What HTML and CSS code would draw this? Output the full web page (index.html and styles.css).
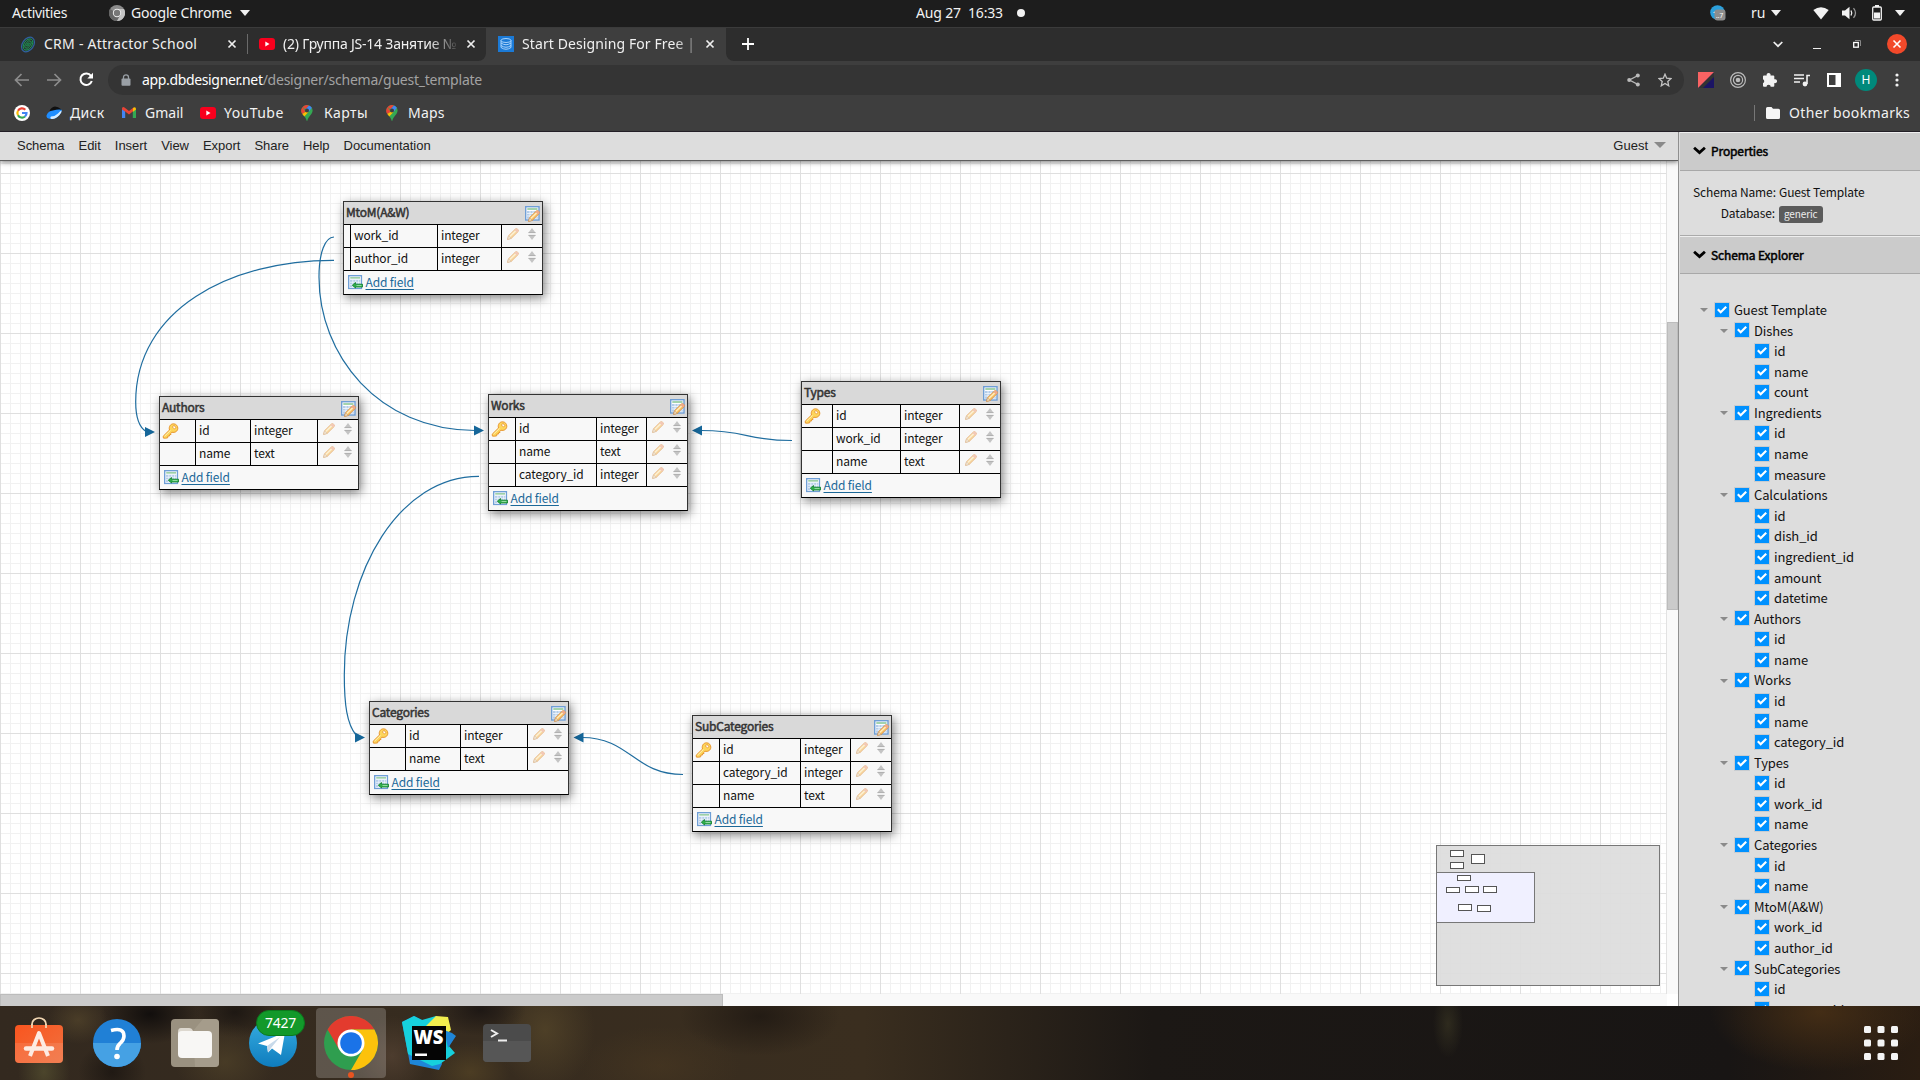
FILE: index.html
```html
<!DOCTYPE html>
<html lang="en">
<head>
<meta charset="utf-8">
<title>Start Designing For Free</title>
<link rel="stylesheet" href="styles.css">
</head>
<body>
<svg class="defs" width="0" height="0">
  <symbol id="i-chrome" viewBox="0 0 54 54">
    <circle cx="27" cy="27" r="27" fill="#2f9e4f"/>
    <path d="M3.6 13.5A27 27 0 0 1 50.4 13.5L27 13.5L15.3 33.8Z" fill="#e33b2e"/>
    <path d="M27 13.5H50.4A27 27 0 0 1 27 54L38.7 33.8Z" fill="#fcc20c"/>
    <circle cx="27" cy="27" r="13.5" fill="#fff"/><circle cx="27" cy="27" r="10.8" fill="#1a73e8"/>
  </symbol>
  <symbol id="i-yt" viewBox="0 0 16 12"><rect width="16" height="12" rx="3" fill="#f8001d"/><path d="M6.3 3.6L10.5 6L6.3 8.4Z" fill="#fff"/></symbol>
  <symbol id="i-pin" viewBox="0 0 12 16">
    <path d="M6 0A5.6 5.6 0 0 1 11.6 5.6C11.6 9.500 7.500 11 6.200 16H5.800C4.500 11 .4 9.500 .4 5.600A5.600 5.600 0 0 1 6 0Z" fill="#34a853"/>
    <path d="M6 0A5.600 5.600 0 0 0 1.700 2L4.400 4.200L8 .4A5.600 5.600 0 0 0 6 0Z" fill="#ea4335"/>
    <path d="M8 .4A5.600 5.600 0 0 1 10.900 2.800L7.500 6.900L4.500 4.200Z" fill="#4285f4"/>
    <path d="M1.700 2A5.600 5.600 0 0 0 1.300 9L4.600 7Z" fill="#ea4335"/>
    <path d="M1.300 9C2 10 2.600 10.700 3.300 11.600L7.500 6.900L4.400 7Z" fill="#fbbc04"/>
    <circle cx="6" cy="5.600" r="2" fill="#3e3e3e"/>
  </symbol>
  <symbol id="i-x" viewBox="0 0 10 10"><path d="M1.500 1.500L8.500 8.500M8.500 1.500L1.500 8.500" stroke="#eee" stroke-width="1.700"/></symbol>
  <symbol id="i-sheet" viewBox="0 0 15 15">
    <rect x=".7" y=".7" width="13.300" height="13.300" fill="#fdfdff" stroke="#6f9fd6" stroke-width="1.400"/>
    <path d="M2.300 3H12.500" stroke="#7cc08a" stroke-width="1.400"/>
    <path d="M2 5H12.800V12.800H2Z" fill="#b4cdea"/>
    <path d="M2 7.500H13M2 10H13M5 5V13M8 5V13M11 5V13" stroke="#f4f8fd" stroke-width=".8"/>
  </symbol>
  <symbol id="i-pencil" viewBox="0 0 12 12">
    <path d="M.6 11.400L1.500 7.800L8.500 .9Q9.600 .2 10.800 1.300Q11.900 2.500 11.100 3.600L4.200 10.400Z" fill="#fbc66a" stroke="#d98b3c" stroke-width=".9"/>
    <path d="M2.600 8.600L9.300 2.200" stroke="#fff0c4" stroke-width="1.300"/>
    <path d="M8.500 .9Q9.600 .2 10.800 1.300Q11.900 2.500 11.100 3.600L10 4.600L7.500 2Z" fill="#f0a98c"/>
    <path d="M.6 11.400L1.500 7.800L4.200 10.400Z" fill="#f3e0c4" stroke="#b98a5a" stroke-width=".5"/>
  </symbol>
  <symbol id="i-key" viewBox="0 0 16 16">
    <path d="M.7 13.200L7 7C6 3.800 8 .8 11 .8C13.700 .8 15.300 3 15.300 5.200C15.300 8.200 12.500 10 9.400 9.200L8.300 10.300L8.500 11.500L7.200 11.500L7 13L5.400 13L5.200 14.800L3 15.200L.9 15.100Z" fill="#fdd55a" stroke="#e8962e" stroke-width="1"/>
    <path d="M2 13.200L8 7.400" stroke="#fff2b8" stroke-width="1"/>
    <ellipse cx="11.700" cy="4.200" rx="1.700" ry="1.300" transform="rotate(40 11.700 4.200)" fill="#fff" stroke="#e8962e" stroke-width=".8"/>
  </symbol>
  <symbol id="i-sort" viewBox="0 0 8 12"><path d="M4 0L7.800 5H.2Z" fill="#c4c4c4"/><path d="M4 12L7.800 7H.2Z" fill="#c4c4c4"/><path d="M.5 4.600H7.500M.5 7.400H7.500" stroke="#aaa" stroke-width=".8"/></symbol>
  <symbol id="i-add" viewBox="0 0 15 15">
    <use href="#i-sheet" width="14.500" height="14.500"/>
    <path d="M4.300 10.200L7.500 7.500V9.200H14.500V12H7.500V13Z" fill="#2fae4a" stroke="#0e7d2b" stroke-width=".8"/><path d="M8.500 10.600H13.500" stroke="#9be0a8"/>
  </symbol>
  <symbol id="i-check" viewBox="0 0 14 14"><rect width="14" height="14" fill="#0091ff"/><path d="M2.800 6.300L5.700 9.200L11.200 3.800" fill="none" stroke="#fff" stroke-width="2.200"/></symbol>
</svg>

<header class="topbar">
  <div class="topbar-left">
    <span class="activities">Activities</span>
    <svg width="16" height="16" viewBox="0 0 16 16"><circle cx="8" cy="8" r="8" fill="#8c8c8c"/><path d="M1 4A8 8 0 0 0 8 16L11 10Z" fill="#666"/><path d="M8 16A8 8 0 0 0 15 4H8L11.500 10Z" fill="#c4c4c4"/><circle cx="8" cy="8" r="4.200" fill="#eee"/><circle cx="8" cy="8" r="3.200" fill="#777"/></svg>
    <span class="appname">Google Chrome</span><i class="caret"></i>
  </div>
  <div class="clock"><span>Aug 27&nbsp; 16:33</span><i class="dot"></i></div>
  <div class="tray">
    <svg class="t-tg" width="16" height="16" viewBox="0 0 16 16"><circle cx="7.500" cy="7.500" r="7.300" fill="#2ba0dc"/><path d="M3 7.500L8 5V9Z" fill="#fff"/><rect x="4.500" y="4.500" width="11" height="11" rx="3" fill="#8d8d8d"/><text x="6" y="13" font-size="6.500" fill="#fff" font-family="Noto Sans">..7</text></svg>
    <span class="lang">ru</span><i class="caret"></i>
    <svg class="t-wifi" width="16" height="13" viewBox="0 0 16 13"><path d="M8 12.500L.3 3Q8 -2.500 15.700 3Z" fill="#f2f2f2"/></svg>
    <svg class="t-vol" width="15" height="14" viewBox="0 0 15 14"><path d="M0 4.500H3L7.500 .8V13.200L3 9.500H0Z" fill="#f2f2f2"/><path d="M9 4.500Q10.500 7 9 9.500" fill="none" stroke="#f2f2f2" stroke-width="1.300"/><path d="M11.500 2.200Q15.500 7 11.500 11.800" fill="none" stroke="#999" stroke-width="1.300"/></svg>
    <svg class="t-bat" width="10" height="16" viewBox="0 0 10 16"><rect x=".7" y="2" width="8.600" height="13" rx="1" fill="none" stroke="#f2f2f2" stroke-width="1.300"/><rect x="3" y="0" width="4" height="2" fill="#f2f2f2"/><rect x="2" y="7.500" width="6" height="6" fill="#f2f2f2"/></svg>
    <i class="caret"></i>
  </div>
</header>

<div class="tabs">
  <div class="tab tab-1">
    <svg width="16" height="17" viewBox="0 0 16 17"><g fill="none" stroke-width=".9" transform="rotate(35 8 8.500)"><ellipse cx="8" cy="8.500" rx="5.600" ry="8" stroke="#2f62a0" stroke-width="1.200"/><ellipse cx="8" cy="8.500" rx="4" ry="6.200" stroke="#17a35a"/><ellipse cx="8" cy="8.500" rx="2.300" ry="4.200" stroke="#17a35a"/><ellipse cx="8" cy="8.500" rx=".8" ry="2" stroke="#17a35a"/></g></svg>
    <span class="title t1">CRM - Attractor School</span>
    <svg class="close" width="10" height="10"><use href="#i-x"/></svg>
  </div>
  <div class="tab tab-2">
    <svg width="16" height="12"><use href="#i-yt"/></svg>
    <span class="title t2">(2) Группа JS-14 Занятие №</span>
    <svg class="close" width="10" height="10"><use href="#i-x"/></svg>
  </div>
  <div class="tab tab-3">
    <svg width="16" height="16" viewBox="0 0 16 16"><rect width="16" height="16" fill="#1b7ad6"/><g fill="none" stroke="#b9dcff" stroke-width=".9"><ellipse cx="8" cy="4.500" rx="5" ry="2"/><path d="M3 4.500V11.500Q8 15 13 11.500V4.500M3 7Q8 10.500 13 7M3 9.500Q8 13 13 9.500"/></g></svg>
    <span class="title t3">Start Designing For Free |</span>
    <svg class="close" width="10" height="10"><use href="#i-x"/></svg>
  </div>
  <div class="newtab"><svg width="12" height="12" viewBox="0 0 12 12"><path d="M6 0V12M0 6H12" stroke="#fff" stroke-width="1.800"/></svg></div>
  <div class="winbtns">
    <svg width="10" height="7" viewBox="0 0 10 7"><path d="M.7 1L5 5.200L9.300 1" fill="none" stroke="#eee" stroke-width="1.700"/></svg>
    <svg class="w-min" width="8" height="6" viewBox="0 0 8 6"><path d="M0 5.500H8" stroke="#eee"/></svg>
    <svg class="w-max" width="8" height="8" viewBox="0 0 8 8"><path d="M2 .5H7.500V6" fill="none" stroke="#888"/><rect x=".7" y="2.500" width="4.600" height="4.700" fill="none" stroke="#fff" stroke-width="1.300"/></svg>
    <svg class="w-x" width="20" height="20" viewBox="0 0 20 20"><circle cx="10" cy="10" r="10" fill="#f2492a"/><path d="M6.500 6.500L13.500 13.500M13.500 6.500L6.500 13.500" stroke="#fff" stroke-width="1.600"/></svg>
  </div>
</div>

<div class="toolbar">
  <svg class="nav" width="15" height="14" viewBox="0 0 15 14"><path d="M15 7H1.500M7.500 1L1.500 7L7.500 13" fill="none" stroke="#8d8d8d" stroke-width="1.700"/></svg>
  <svg class="nav n2" width="15" height="14" viewBox="0 0 15 14"><path d="M0 7H13.500M7.500 1L13.500 7L7.500 13" fill="none" stroke="#8d8d8d" stroke-width="1.700"/></svg>
  <svg class="nav n3" width="15" height="15" viewBox="0 0 15 15"><path d="M12.800 9A5.800 5.800 0 1 1 12 3.800" fill="none" stroke="#fff" stroke-width="2"/><path d="M14 .8V6.500H8.300Z" fill="#fff"/></svg>
  <div class="urlbar">
    <svg width="10" height="12" viewBox="0 0 10 12"><rect x=".5" y="4.500" width="9" height="7.200" rx="1" fill="#9aa0a6"/><path d="M2.500 5V3.300A2.500 2.500 0 0 1 7.500 3.300V5" fill="none" stroke="#9aa0a6" stroke-width="1.300"/></svg>
    <span class="url"><b>app.dbdesigner.net</b><span>/designer/schema/guest_template</span></span>
    <svg class="u-share" width="13" height="14" viewBox="0 0 13 14"><path d="M11 2.500L2.500 7L11 11.500" fill="none" stroke="#bbb" stroke-width="1.400"/><g fill="#bbb"><circle cx="10.800" cy="2.400" r="2"/><circle cx="2.200" cy="7" r="2"/><circle cx="10.800" cy="11.600" r="2"/></g></svg>
    <svg class="u-star" width="14" height="14" viewBox="0 0 14 14"><path d="M7 1.200L8.700 5.200L13 5.600L9.800 8.500L10.700 12.800L7 10.500L3.300 12.800L4.200 8.500L1 5.600L5.300 5.200Z" fill="none" stroke="#c4c4c4" stroke-width="1.300"/></svg>
  </div>
  <div class="exts">
    <svg width="16" height="16" viewBox="0 0 16 16"><rect width="16" height="16" fill="#1b1464"/><path d="M0 16L16 0V5L5 16Z" fill="#333"/><path d="M0 0H16L0 16Z" fill="#f96363"/></svg>
    <svg width="16" height="16" viewBox="0 0 16 16"><g fill="none" stroke="#bbb" stroke-width="1.200"><circle cx="8" cy="8" r="7.400"/><circle cx="8" cy="8" r="4.600"/></g><circle cx="8" cy="8" r="2.300" fill="#bbb"/></svg>
    <svg width="16" height="16" viewBox="0 0 16 16"><path d="M1 4.500Q1 3.500 2 3.500H4.700A2 2 0 1 1 8.500 3.500H11.300Q12.300 3.500 12.300 4.500V7.300A2 2 0 1 1 12.300 11V13.800Q12.300 14.800 11.300 14.800H8.700A2 2 0 0 0 4.500 14.800H2Q1 14.800 1 13.800V11A2 2 0 0 0 1 7.300Z" fill="#f2f2f2"/></svg>
    <svg width="16" height="14" viewBox="0 0 16 14"><path d="M0 2H10M0 5.500H10M0 9H6" stroke="#f2f2f2" stroke-width="1.600"/><path d="M13 11V2.500H16" fill="none" stroke="#f2f2f2" stroke-width="1.600"/><circle cx="11" cy="11" r="2.400" fill="#f2f2f2"/></svg>
    <svg width="14" height="14" viewBox="0 0 14 14"><rect x="1" y="1" width="12" height="12" fill="none" stroke="#fff" stroke-width="2"/><rect x="8.500" y="1" width="5" height="12" fill="#fff"/></svg>
    <span class="avatar">H</span>
    <svg width="4" height="14" viewBox="0 0 4 14"><g fill="#f2f2f2"><circle cx="2" cy="2" r="1.600"/><circle cx="2" cy="7" r="1.600"/><circle cx="2" cy="12" r="1.600"/></g></svg>
  </div>
</div>

<div class="bookmarks">
  <svg class="b-g" width="16" height="16" viewBox="0 0 16 16"><circle cx="8" cy="8" r="8" fill="#fff"/><g fill="none" stroke-width="2.200"><path d="M11.300 4.700A4.600 4.600 0 0 0 4 5.800" stroke="#ea4335"/><path d="M4 5.700A4.600 4.600 0 0 0 4 10.300" stroke="#fbbc05"/><path d="M4 10.200A4.600 4.600 0 0 0 11 11.500" stroke="#34a853"/><path d="M11 11.500A4.600 4.600 0 0 0 12.500 8H8" stroke="#4285f4"/></g></svg>
  <svg class="b-d" width="16" height="14" viewBox="0 0 16 14"><path d="M3.500 5Q5 1 9 .5Q12 .5 15.500 3.500L10 7Z" fill="#101010"/><path d="M.5 9.500Q2 5 7 4.500Q12 3 15.800 3.800Q16 6 13.500 9Q9.500 13.500 4.500 13Q0 12.500 .5 9.500Z" fill="#1e8dff"/><path d="M5 10.500Q9 10.500 12 7.500Q14 5 15.600 4.500Q16 6 13.500 9Q9.500 13.500 5.500 13Q3.500 12 5 10.500Z" fill="#d6ecff"/></svg>
  <span class="bm bm-disk">Диск</span>
  <svg class="b-m" width="14" height="11" viewBox="0 0 14 11"><path d="M0 1.500V11H3.200V4.500Z" fill="#4285f4"/><path d="M14 1.500V11H10.800V4.500Z" fill="#34a853"/><path d="M0 1.200Q.8 -.6 2.500 .5L7 4L11.500 .5Q10.800 4 10.800 4.500L7 7.500L3.200 4.500L0 2.500Z" fill="#ea4335"/><path d="M11 .9Q13 -.6 14 1.400V2.500L10.800 5Z" fill="#fbbc04"/></svg>
  <span class="bm bm-gmail">Gmail</span>
  <svg class="b-y" width="16" height="12"><use href="#i-yt"/></svg>
  <span class="bm bm-yt">YouTube</span>
  <svg class="b-p" width="12" height="16"><use href="#i-pin"/></svg>
  <span class="bm bm-karty">Карты</span>
  <svg class="b-p2" width="12" height="16"><use href="#i-pin"/></svg>
  <span class="bm bm-maps">Maps</span>
  <div class="other"><svg width="14" height="12" viewBox="0 0 14 12"><path d="M0 1.500Q0 0 1.500 0H5.500L7 1.700H12.500Q14 1.700 14 3.200V10.500Q14 12 12.500 12H1.500Q0 12 0 10.500Z" fill="#f5f5f5"/></svg><span class="bm bm-other">Other bookmarks</span></div>
</div>

<main class="page">
  <section class="designer">
    <nav class="menu">
      <a>Schema</a><a>Edit</a><a>Insert</a><a>View</a><a>Export</a><a>Share</a><a>Help</a><a>Documentation</a>
      <span class="user">Guest<i></i></span>
    </nav>
    <div class="work">
      <div class="canvas">
        <svg class="links" width="1667" height="834" viewBox="0 160 1667 834">
          <g fill="none" stroke="#1f6d9f" stroke-width="1.200">
            <path d="M334 237C325 237 319 253 319 277C319 355 378 430 475 430.500"/>
            <path d="M334 260.300C230 260 135.700 310 135.700 402C135.700 418 139 427 146 431.500"/>
            <path d="M479 476.300C400 476 344.300 570 344.300 675C344.300 705 347 724 356 735"/>
            <path d="M701 430.500C747 430.500 747 440.500 792 440.500"/>
            <path d="M582 737.500C630 737.500 634 774.500 683 774.500"/>
          </g>
          <g fill="#16679a">
            <path d="M474 425.500V435.500L484 430.500Z"/><path d="M145 427V437L155 432Z"/><path d="M355 732.500V742.500L365 737.500Z"/>
            <path d="M702 425.500V435.500L692 430.500Z"/><path d="M583.500 732.500V742.500L573.500 737.500Z"/>
          </g>
        </svg>
        <div id="tables"></div>
        <div class="minimap">
          <svg width="224" height="141" viewBox="0 0 224 141"><rect x=".5" y="27.500" width="98" height="50" fill="#f0f0ff" stroke="#777"/>
          <g fill="#fff" stroke="#555"><rect x="14.500" y="5.500" width="13" height="6"/><rect x="35.500" y="9.500" width="13" height="9"/><rect x="14.500" y="17.500" width="13" height="6"/><rect x="21.500" y="30.500" width="13" height="5"/><rect x="10.500" y="42.500" width="13" height="5"/><rect x="29.500" y="41.500" width="13" height="6"/><rect x="47.500" y="41.500" width="13" height="6"/><rect x="22.500" y="59.500" width="13" height="6"/><rect x="41.500" y="60.500" width="13" height="6"/></g></svg>
        </div>
      </div>
      <div class="vscroll"><i></i></div>
      <div class="hscroll"><i></i></div>
      <div class="corner"></div>
    </div>
  </section>
  <aside class="side">
    <h2><svg width="13" height="9" viewBox="0 0 12 8"><path d="M1 1.500L6 6L11 1.500" fill="none" stroke="#000" stroke-width="2.600"/></svg><span>Properties</span></h2>
    <div class="props">
      <span class="k">Schema Name:</span><span>Guest Template</span>
      <span class="k">Database:</span><span><em>generic</em></span>
    </div>
    <h2><svg width="13" height="9" viewBox="0 0 12 8"><path d="M1 1.500L6 6L11 1.500" fill="none" stroke="#000" stroke-width="2.600"/></svg><span>Schema Explorer</span></h2>
    <div class="tree" id="tree"></div>
  </aside>
</main>

<footer class="dock">
  <div class="app"><svg width="48" height="46" viewBox="0 0 48 46"><defs><linearGradient id="gs" x1="0" y1="0" x2="1" y2="1"><stop offset="0" stop-color="#f9551f"/><stop offset="1" stop-color="#f0713f"/></linearGradient></defs><path d="M17 11V7A7 6 0 0 1 31 7V11" fill="none" stroke="#f3d8b4" stroke-width="1.700"/><rect y="8" width="48" height="38" rx="4" fill="url(#gs)"/><path d="M17 11V7M31 11V7" stroke="#f3d8b4" stroke-width="1.700"/><path d="M0 26H48V42Q48 46 44 46H4Q0 46 0 42Z" fill="#fff" opacity=".1"/><g fill="none" stroke="#fdebe2" stroke-width="4"><path d="M15 39L24 16L33 39" stroke-linejoin="round"/><path d="M11 31.500H37" stroke-linecap="round" stroke-width="4.500"/></g></svg></div>
  <div class="app"><svg width="48" height="48" viewBox="0 0 48 48"><circle cx="24" cy="24" r="24" fill="#2080d6"/><path d="M0 24A24 24 0 0 0 48 24Z" fill="#45a1e4"/><path d="M18 11.500Q31 8 31 17Q31 21 27 24.500Q24 27 24 31" fill="none" stroke="#fff" stroke-width="3.600"/><circle cx="24" cy="37.500" r="2.800" fill="#fff"/></svg></div>
  <div class="app"><svg width="48" height="48" viewBox="0 0 48 48"><rect width="48" height="48" rx="4" fill="#9a9180"/><path d="M22 12L32 0H44Q48 0 48 4V44Q48 48 44 48H24Z" fill="#aaa190" opacity=".7"/><path d="M7 13Q7 9 10 9H18Q21 9 22 12H37V20H7Z" fill="#ddd8cf"/><rect x="7" y="12" width="34" height="27" rx="4" fill="#f8f7f5"/></svg></div>
  <div class="app"><svg width="48" height="48" viewBox="0 0 48 48"><defs><linearGradient id="gt" x1="0" y1="0" x2="0" y2="1"><stop offset="0" stop-color="#37aee2"/><stop offset="1" stop-color="#0f7cbd"/></linearGradient></defs><circle cx="24" cy="24" r="24" fill="url(#gt)"/><path d="M9 24.500L36 13.500L32 36L23 29.500L19 33.500L18 27Z" fill="#fff"/><path d="M18 27L31 18L22 29L19 33.500Z" fill="#c8daea"/></svg><b class="badge">7427</b></div>
  <div class="app active"><svg width="54" height="54"><use href="#i-chrome"/></svg><i></i></div>
  <div class="app"><svg width="54" height="54" viewBox="0 0 54 54"><path d="M0 6L12 0L24 6L32 10L40 48L37 54L8 48Z" fill="#1e86d8"/><path d="M0 6L12 0L20 4L34 0L42 14L53 20L47 30L53 37L38 48L30 50L6 38Z" fill="#16d0dc"/><path d="M24 10L34 0L46 1L49 14L40 22Z" fill="#f2ee4e"/><path d="M42 14L50 17L54 20L46 32Z" fill="#1f86d8"/><rect x="10" y="10" width="34" height="34" fill="#050505"/><rect x="13" y="37.500" width="12" height="2.500" fill="#fff"/><text x="11.500" y="28" font-family="Open Sans" font-weight="800" font-size="20" textLength="30" lengthAdjust="spacingAndGlyphs" fill="#fff">WS</text></svg></div>
  <div class="app"><svg width="48" height="38" viewBox="0 0 48 38"><rect width="48" height="38" rx="4" fill="#4b4b4b"/><path d="M0 17H48V34Q48 38 44 38H4Q0 38 0 34Z" fill="#565656"/><path d="M8 6L14 9.500L8 13" fill="none" stroke="#eee" stroke-width="2"/><path d="M15 16.500H24" stroke="#eee" stroke-width="2"/></svg></div>
  <svg class="grid9" width="34" height="34" viewBox="0 0 34 34"><g fill="#f4f4f4"><rect width="7" height="7" rx="1.500"/><rect x="13.500" width="7" height="7" rx="1.500"/><rect x="27" width="7" height="7" rx="1.500"/><rect y="13.500" width="7" height="7" rx="1.500"/><rect x="13.500" y="13.500" width="7" height="7" rx="1.500"/><rect x="27" y="13.500" width="7" height="7" rx="1.500"/><rect y="27" width="7" height="7" rx="1.500"/><rect x="13.500" y="27" width="7" height="7" rx="1.500"/><rect x="27" y="27" width="7" height="7" rx="1.500"/></g></svg>
</footer>
<script src="script.js"></script>
</body>
</html>
```
FILE: styles.css
```css
* { box-sizing: border-box; }
body { margin: 0; width: 1920px; height: 1080px; overflow: hidden; display: flex; flex-direction: column; font-family: "Noto Sans", sans-serif; background: #1a1614; }
.defs { position: absolute; }
svg { display: block; flex: none; }
span { white-space: nowrap; }

.topbar { height: 27px; background: #1d1d1d; color: #f2f2f2; font-size: 14px; line-height: 26px; display: grid; grid-template-columns: 1fr auto 1fr; flex: none; }
.topbar-left, .clock, .tray { display: flex; align-items: center; height: 26px; }
.topbar-left { padding-left: 12px; }
.activities { width: 97px; letter-spacing: -.33px; }
.appname { margin-left: 6px; width: 109px; letter-spacing: -.2px; }
.caret { width: 0; height: 0; border: 5px solid transparent; border-top: 6px solid #f2f2f2; border-bottom: 0; }
.clock { padding-left: 21px; }
.clock span { width: 101px; letter-spacing: -.15px; }
.dot { width: 8px; height: 8px; border-radius: 50%; background: #f2f2f2; }
.tray { justify-content: flex-end; padding-right: 15px; }
.lang { margin: 0 6px 0 25px; width: 14px; }
.t-wifi { margin-left: 32px; }
.t-vol { margin-left: 13px; }
.t-bat { margin: 0 13px 0 15px; }

.tabs { height: 34px; background: #3e3e3e; border-top: 1px solid #3b3b3b; display: flex; flex: none; color: #f0f0f0; font-size: 14px; }
.tab { display: flex; align-items: center; height: 33px; background: #2d2d2d; padding-bottom: 1px; }
.tab-1 { width: 247px; padding-left: 20px; }
.tab-2 { width: 239px; padding-left: 11px; border-radius: 0 0 8px 0; position: relative; }
.tab-2::before { content: ""; position: absolute; left: 0; top: 6px; width: 1px; height: 20px; background: #6a6a6a; }
.tab-2 svg:first-child { margin-left: 1px; }
.tab-3 { width: 240px; background: #3e3e3e; padding-left: 12px; }
.title { margin: -1px 0 0 8px; width: 176px; overflow: hidden; }
.t1 { width: 183px; letter-spacing: .25px; }
.t2 { -webkit-mask-image: linear-gradient(90deg, #000 145px, transparent 178px); mask-image: linear-gradient(90deg, #000 145px, transparent 178px); letter-spacing: -.3px; }
.t3 { -webkit-mask-image: linear-gradient(90deg, #000 152px, transparent 184px); mask-image: linear-gradient(90deg, #000 152px, transparent 184px); letter-spacing: .1px; }
.t2 { letter-spacing: -.22px; }
.close { margin-left: 7px; }
.t1 + .close { margin-left: 0; }
.newtab { flex: 1; background: #2d2d2d; border-radius: 0 0 0 8px; display: flex; align-items: center; padding: 0 0 1px 16px; }
.winbtns { width: 160px; background: #2d2d2d; display: flex; align-items: center; padding: 0 0 1px 13px; }
.w-min { margin: 4px 0 0 30px; }
.w-max { margin-left: 32px; }
.w-x { margin-left: 26px; }

.toolbar { height: 37px; background: #3e3e3e; display: flex; align-items: center; padding-left: 14px; flex: none; }
.n2 { margin-left: 18px; }
.n3 { margin-left: 17px; }
.urlbar { margin: 1px 0 0 14px; width: 1576px; height: 30px; border-radius: 15px; background: #343434; display: flex; align-items: center; padding: 0 12px 0 13px; }
.url { margin: -2px 0 0 11px; flex: 1; font-size: 14px; color: #a2a2a2; letter-spacing: -.23px; }
.url b { color: #fff; font-weight: 400; letter-spacing: -.35px; }
.u-share { margin-right: 18px; }
.exts { display: flex; align-items: center; padding-left: 14px; gap: 16px; }
.exts svg:nth-child(5) { margin-left: 1px; }
.avatar { width: 22px; height: 22px; border-radius: 50%; background: #00897b; color: #fff; font-size: 12px; line-height: 22px; text-align: center; margin: 0 2px 0 -2px; }

.bookmarks { height: 34px; background: #3e3e3e; border-bottom: 1px solid #231f26; display: flex; align-items: center; padding: 0 11px 4px 14px; flex: none; }
.bm { font-size: 14px; color: #f2f2f2; margin-top: -1px; }
.b-d { margin-left: 16px; }
.bm-disk { margin-left: 8px; width: 52px; letter-spacing: .3px; }
.bm-gmail { margin-left: 9px; width: 55px; }
.bm-yt { margin-left: 8px; width: 77px; letter-spacing: .45px; }
.bm-karty { margin-left: 11px; width: 62px; letter-spacing: .4px; }
.bm-maps { margin-left: 10px; letter-spacing: .2px; }
.other { margin-left: auto; display: flex; align-items: center; border-left: 1px solid #777; height: 16px; padding-left: 11px; }
.bm-other { margin-left: 9px; width: 120px; letter-spacing: .35px; }

.page { flex: none; height: 874px; display: flex; }
.designer { width: 1678px; display: flex; flex-direction: column; }
.menu { height: 29px; background: #ddd; border-bottom: 1px solid #5e5e5e; box-shadow: 0 1px 5px rgba(0,0,0,.55); display: flex; align-items: center; padding: 0 12px 1px 17px; gap: 14px; font: 13px "Liberation Sans", sans-serif; color: #222; position: relative; z-index: 2; clip-path: inset(0 0 -12px 0); }
.menu a { letter-spacing: -.03px; }
.user { margin-left: auto; display: flex; align-items: center; gap: 6px; }
.user i { border: 6px solid transparent; border-top: 6px solid #8a8a8a; border-bottom: 0; margin-top: -2px; }
.work { flex: 1; display: grid; grid-template-columns: 1667px 11px; grid-template-rows: 833px 12px; min-height: 0; }
.canvas { position: relative; overflow: hidden; background-color: #fff; border-right: 1px solid #e2e2e2;
  background-image: linear-gradient(90deg, #dfdfdf 1px, transparent 1px), linear-gradient(#dfdfdf 1px, transparent 1px), linear-gradient(90deg, #f1f1f1 1px, transparent 1px), linear-gradient(#f1f1f1 1px, transparent 1px);
  background-size: 80px 80px, 80px 80px, 10px 10px, 10px 10px; background-position: 0 0, 0 12px, 0 0, 0 2px; }
.links { position: absolute; left: 0; top: -1px; }
.vscroll { background: #f9f9f9; padding-top: 161px; }
.vscroll i { display: block; height: 288px; background: #cbcbcb; border: 1px solid #bcbcbc; }
.hscroll { background: #f9f9f9; }
.hscroll i { display: block; height: 12px; width: 723px; background: #cbcbcb; border: 1px solid #bcbcbc; border-bottom: 0; }
.corner { background: #fff; }
.minimap { position: absolute; left: 1436px; top: 684px; width: 224px; height: 141px; border: 1px solid #777; background: rgba(221,221,221,.93); }
.minimap svg { margin: -1px; }

.tbl { position: absolute; width: 200px; border: 1px solid #333; border-bottom-color: #000; background: #f8f8f8; box-shadow: 2px 3px 10px rgba(0,0,0,.5); font: 12px/20px "Noto Sans CJK SC", sans-serif; letter-spacing: -.13px; color: #111; }
.tbl header { height: 23px; background: #d9d9d9; border-bottom: 1px solid #000; display: flex; justify-content: space-between; padding: 0 2px 0 2px; -webkit-text-stroke: .5px #333; color: #333; letter-spacing: -.2px; }
.tbl header svg { margin-top: 4px; }
.row { display: grid; height: 23px; border-bottom: 1px solid #000; }
.row > * + * { border-left: 1px solid #000; padding-left: 3px; }
.key { padding: 3px 0 0 2px; overflow: hidden; }
.ops { display: flex; justify-content: space-between; padding: 3px 6px 0 5px !important; }
.ops svg:first-child { opacity: .6; }
.add { height: 23px; display: flex; padding: 0 0 0 4px; }
.add svg { margin: 4px 2.500px 0 0; }
.add a { color: #1b6898; text-decoration: underline; text-underline-offset: 2px; line-height: 21px; }

.side { width: 242px; border-left: 1px solid #8f8f8f; background: #ddd; overflow: hidden; font: 12px/21px "Noto Sans CJK SC", sans-serif; letter-spacing: -.12px; color: #111; padding-left: 1px; }
.side h2 { margin: 0; height: 38px; background: #cbcbcb; border-top: 1px solid #eee; border-bottom: 1px solid #a8a8a8; display: flex; align-items: center; padding: 0 0 1px 13px; font-size: 12px; font-weight: 400; color: #000; -webkit-text-stroke: .5px #000; gap: 5px; }
.side h2:first-child { height: 39px; padding-bottom: 3px; }
.props { height: 65px; border-bottom: 1px solid #aaa; display: grid; grid-template-columns: 82px 1fr; column-gap: 4px; padding: 10px 0 0 13px; grid-auto-rows: 21px; }
.k { text-align: right; }
.props em { display: inline-block; font-style: normal; background: #5b5b5b; color: #eee; border-radius: 3px; font-size: 10px; line-height: 16px; height: 17px; padding: 0 5px; vertical-align: top; margin-top: 4px; }
.tree { padding: 26px 0 0 20px; font-size: 13px; }
.node { height: 20.590px; line-height: 20.590px; display: flex; align-items: center; }
.node i { width: 15px; display: flex; }
.node i::after { content: ""; border: 4px solid transparent; border-top-color: #8a8a8a; border-bottom: 0; }
.node .box { outline: 1px solid #c8ccd0; margin: -1px 5px 0 0; }
.l1 { padding-left: 20px; }
.l2 { padding-left: 40px; }
.l2 i::after { display: none; }

.dock { flex: none; height: 74px; display: flex; align-items: center; position: relative; padding-bottom: 1px;
  background:
    radial-gradient(ellipse 26px 34px at 44px 66px, rgba(92,88,52,.6), transparent),
    radial-gradient(ellipse 30px 24px at 78px 14px, rgba(96,80,48,.5), transparent),
    radial-gradient(ellipse 50px 30px at 150px 8px, rgba(16,13,12,.95), transparent),
    radial-gradient(ellipse 34px 30px at 112px 66px, rgba(18,14,12,.6), transparent),
    radial-gradient(ellipse 50px 40px at 225px 56px, rgba(84,70,42,.6), transparent),
    radial-gradient(ellipse 40px 26px at 235px 6px, rgba(20,16,14,.7), transparent),
    radial-gradient(ellipse 36px 40px at 392px 50px, rgba(92,72,56,.6), transparent),
    radial-gradient(ellipse 40px 30px at 470px 66px, rgba(90,72,38,.6), transparent),
    radial-gradient(ellipse 46px 26px at 480px 4px, rgba(24,19,18,.8), transparent),
    radial-gradient(ellipse 50px 60px at 545px 24px, rgba(92,76,44,.6), transparent),
    radial-gradient(ellipse 80px 40px at 660px 60px, rgba(76,58,34,.5), transparent),
    radial-gradient(ellipse 80px 40px at 760px 10px, rgba(26,20,16,.7), transparent),
    radial-gradient(ellipse 15px 34px at 1448px 18px, rgba(60,56,36,.6), transparent),
    radial-gradient(ellipse 110px 60px at 1820px 6px, rgba(76,50,22,.8), transparent),
    linear-gradient(90deg, #33291f 0, #3a2e1f 45%, #1c1815 60%, #181514 90%, #2a1d12 100%); }
.app { width: 70px; height: 70px; margin-right: 8px; display: flex; align-items: center; justify-content: center; position: relative; }
.dock .app:first-child { margin-left: 4px; }
.dock .app:first-child svg { margin-top: -6px; }
.active { background: rgba(255,255,255,.2); border-radius: 4px; }
.active i { position: absolute; left: 32px; bottom: 0; width: 6px; height: 6px; border-radius: 50%; background: #e95420; }
.badge { position: absolute; left: 18px; top: 2px; width: 49px; height: 26px; border-radius: 13px; background: #12992a; border: 1px solid #0b7a1d; color: #fff; font: 14px/23px "Noto Sans", sans-serif; text-align: center; letter-spacing: -.2px; }
.grid9 { margin: 0 22px 0 auto; }
```
FILE: script.js
```js
const icon = (id, w, h, cls) => `<svg class="${cls || ''}" width="${w}" height="${h}"><use href="#i-${id}"/></svg>`;

// name, left, top, widths of the key / name / type columns, fields
const tables = [
  ['MtoM(A&amp;W)', 343, 201, [6, 87, 64], [['work_id', 'integer'], ['author_id', 'integer']], false],
  ['Authors', 159, 396, [35, 55, 67], [['id', 'integer'], ['name', 'text']], true],
  ['Works', 488, 394, [26, 81, 50], [['id', 'integer'], ['name', 'text'], ['category_id', 'integer']], true],
  ['Types', 801, 381, [30, 68, 59], [['id', 'integer'], ['work_id', 'integer'], ['name', 'text']], true],
  ['Categories', 369, 701, [35, 55, 67], [['id', 'integer'], ['name', 'text']], true],
  ['SubCategories', 692, 715, [26, 81, 50], [['id', 'integer'], ['category_id', 'integer'], ['name', 'text']], true]
];

document.getElementById('tables').innerHTML = tables.map(([name, x, y, cols, fields, pk]) => `
  <section class="tbl" style="left:${x}px;top:${y - 161}px">
    <header><span>${name}</span><svg width="15" height="16"><use href="#i-sheet" width="15" height="15"/><use href="#i-pencil" x="3" y="4" width="12" height="12"/></svg></header>
    ${fields.map(([f, t], n) => `<div class="row" style="grid-template-columns:${cols.join('px ')}px 1fr">
      <span class="key">${pk && n === 0 ? icon('key', 17, 16) : ''}</span><span>${f}</span><span>${t}</span>
      <span class="ops">${icon('pencil', 12, 12)}${icon('sort', 8, 12)}</span></div>`).join('')}
    <div class="add">${icon('add', 15, 15)}<a>Add field</a></div>
  </section>`).join('');

const tree = {
  'Dishes': ['id', 'name', 'count'],
  'Ingredients': ['id', 'name', 'measure'],
  'Calculations': ['id', 'dish_id', 'ingredient_id', 'amount', 'datetime'],
  'Authors': ['id', 'name'],
  'Works': ['id', 'name', 'category_id'],
  'Types': ['id', 'work_id', 'name'],
  'Categories': ['id', 'name'],
  'MtoM(A&amp;W)': ['work_id', 'author_id'],
  'SubCategories': ['id', 'category_id']
};
const node = (level, text) => `<div class="node l${level}"><i></i>${icon('check', 14, 14, 'box')}<span>${text}</span></div>`;
document.getElementById('tree').innerHTML = node(0, 'Guest Template') +
  Object.entries(tree).map(([t, f]) => node(1, t) + f.map(x => node(2, x)).join('')).join('');
```
